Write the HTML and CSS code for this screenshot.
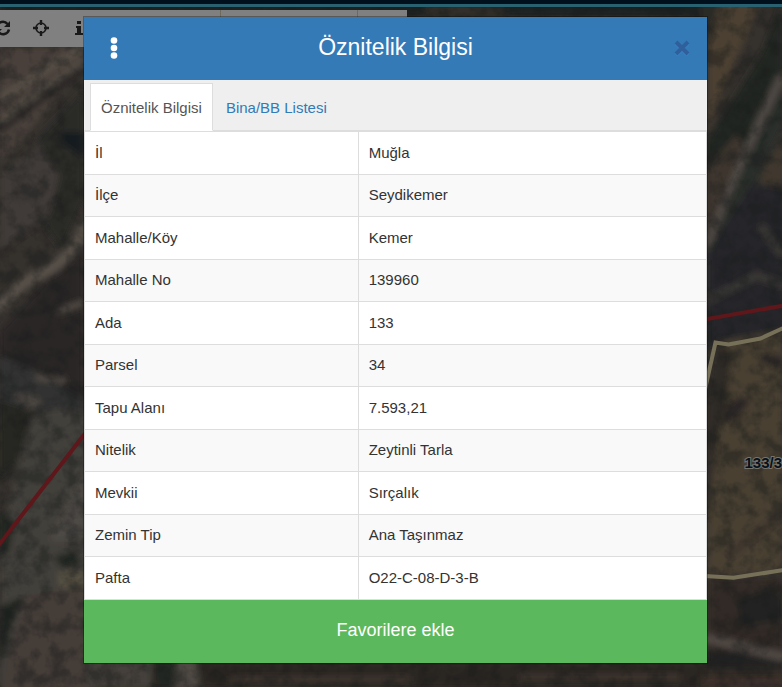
FILE: index.html
```
<!DOCTYPE html>
<html lang="tr">
<head>
    <meta charset="utf-8">
    <title>Parsel Sorgu</title>
    <link rel="stylesheet" href="styles.css">
</head>
<body>
<!-- Map -->
<svg class="map" viewBox="0 0 782 687" preserveAspectRatio="xMidYMid slice" aria-hidden="true">
    <defs>
        <filter id="soft" x="-10%" y="-10%" width="120%" height="120%"><feGaussianBlur stdDeviation="3"/></filter>
        <filter id="ground" x="0" y="0" width="100%" height="100%" color-interpolation-filters="sRGB">
            <feTurbulence type="fractalNoise" baseFrequency="0.06" numOctaves="4" seed="8"/>
            <feColorMatrix values="0 0 0 0 0.09  0 0 0 0 0.1  0 0 0 0 0.1  3 0 0 0 -1.2"/>
        </filter>
    </defs>
    <rect width="782" height="687" fill="#35312d"/>
    <g filter="url(#soft)">
        <!-- left side -->
        <path d="M0 47h84v20L0 165z" fill="#48413b"/>
        <path d="M0 98L84 47M0 122L84 62" stroke="#575047" stroke-width="7"/>
        <path d="M0 130L84 68" stroke="#292825" stroke-width="8"/>
        <path d="M40 135L84 90v110L62 250 20 190z" fill="#292a28"/>
        <path d="M0 175l40-30 20 30-10 40-50 35z" fill="#403b37"/>
        <path d="M60 132h24v25L66 145z" fill="#131a20"/>
        <path d="M0 330l84-90v190H0z" fill="#292826"/>
        <path d="M-5 313Q15 285 44 272T90 218" fill="none" stroke="#58514a" stroke-width="11"/>
        <path d="M0 355Q40 370 84 400v10H0z" fill="#333230"/>
        <path d="M36 377l30 3M15 395l22 6-15 14M58 312l26-10" fill="none" stroke="#575048" stroke-width="5"/>
        <path d="M30 420Q50 400 90 414V700H0V540z" fill="#433f3a"/>
        <path d="M0 400l34 10-16 50-18 20z" fill="#252624"/>
        <path d="M50 540L84 470v70z" fill="#4d4a44"/>
        <path d="M0 510l15 10-5 30-10 10zM0 605l23-8-12 30-11 40zM54 556l20-6 10 13-22 4z" fill="#232522"/>
        <path d="M60 571h26v14H60z" fill="#5d5646"/>
        <path d="M24 595L90 584v110H0z" fill="#443d38"/>
        <!-- strip under the dialog -->
        <path d="M84 660h623v27H84z" fill="#292622"/>
        <path d="M84 660h68v27H84z" fill="#443f3a"/>
        <path d="M154 660h36l12 27h-44z" fill="#222522"/>
        <path d="M178 660h18l4 27h-26z" fill="#514b44"/>
        <path d="M230 678h180M520 676h160" stroke="#3d352f" stroke-width="6"/>
        <!-- right side -->
        <path d="M680 0h80L707 130V30z" fill="#4b3f33"/>
        <path d="M680 0h40l-15 60z" fill="#2a2926"/>
        <path d="M782 0v110l-75 150V140l56-90z" fill="#242624"/>
        <path d="M707 168l30-35 10 20-40 90z" fill="#3c342e"/>
        <path d="M707 248Q740 160 782 75" fill="none" stroke="#504a44" stroke-width="9"/>
        <path d="M717 255Q747 170 787 100" fill="none" stroke="#2a2d29" stroke-width="18"/>
        <path d="M765 165l20-25v50l-28 5z" fill="#40372f"/>
        <path d="M707 253l45-70 35 5v150l-80 10z" fill="#25282a"/>
        <path d="M707 300l50-25 26 10M760 225l22 30" fill="none" stroke="#3b3835" stroke-width="7"/>
        <path d="M715 342l67-12v240l-75 6v-180z" fill="#4a3f32"/>
        <path d="M707 390l10-45 15 5-6 50-12 60-7 70z" fill="#2d2b27"/>
        <path d="M726 405l14-10 11 5-16 20-14 3zM760 352l20 3 2 14-24-9z" fill="#2a2825"/>
        <path d="M728 555l54-42" stroke="#3c362d" stroke-width="8"/>
        <path d="M707 578h75v109h-75z" fill="#302b27"/>
        <path d="M738 600l32-12 12 10v20l-40 7zM707 650h75v17h-75z" fill="#202322"/>
        <path d="M700 636L790 658" stroke="#514a44" stroke-width="9"/>
        <path d="M700 680h85" stroke="#3c332b" stroke-width="9"/>
        <!-- above the title bar -->
        <path d="M0 0h700v17H0z" fill="#1f2120"/>
        <path d="M425 10h80" stroke="#37332d" stroke-width="7"/>
    </g>
    <rect width="782" height="687" filter="url(#ground)" opacity=".4"/>
    <path d="M-2 546L90 427M704 319l80-14" fill="none" stroke="#5e171a" stroke-width="4"/>
    <path d="M700 409l15-67 13 2 32-6 24-11M700 575l33 2 51-8" fill="none" stroke="#777059" stroke-width="4"/>
    <text class="parcel-label" x="744" y="467">133/3</text>
</svg>

<div class="topbar"></div>
<div class="toolbar">
    <div class="tool-group">
        <button type="button" aria-label="Yenile">
            <svg viewBox="0 0 16 16"><path d="M2 6.500A6 6 0 0 1 12.500 4M14 9.500A6 6 0 0 1 3.500 12" fill="none" stroke="currentColor" stroke-width="2.500"/><path d="M15 1v6H9zM1 15V9h6z" fill="currentColor"/></svg>
        </button>
        <button type="button" aria-label="Konum">
            <svg viewBox="0 0 16 16"><circle cx="8" cy="8" r="5" fill="none" stroke="currentColor" stroke-width="1.600"/><path d="M8 0v5M8 11v5M0 8h5M11 8h5" stroke="currentColor" stroke-width="2.400"/></svg>
        </button>
        <button type="button" aria-label="Bilgi">
            <svg viewBox="0 0 16 16"><path d="M6 1h4v3H6zM5 6h5v7h2v2H4v-2h2V8H5z" fill="currentColor"/></svg>
        </button>
    </div>
    <div class="tool-group"></div>
    <div class="tool-group"></div>
</div>

<!-- Dialog -->
<div class="dialog-wrap">
    <div class="dialog" role="dialog" aria-labelledby="dialogTitle">
        <div class="dialog-header">
            <button type="button" class="menu-btn" aria-label="Menü">
                <svg viewBox="0 0 8 22"><circle cx="4" cy="3.500" r="3.300"/><circle cx="4" cy="11" r="3.300"/><circle cx="4" cy="18.500" r="3.300"/></svg>
            </button>
            <h1 id="dialogTitle">Öznitelik Bilgisi</h1>
            <button type="button" class="close-btn" aria-label="Kapat">
                <svg viewBox="0 0 18 18"><path d="M3 4l12 12M15 4L3 16" stroke="#3a85ca" stroke-width="4"/><path d="M3 3l12 12M15 3L3 15" stroke="#2f609b" stroke-width="4"/></svg>
            </button>
        </div>
        <nav class="tabs">
            <a href="#oznitelik" class="tab active">Öznitelik Bilgisi</a>
            <a href="#bina" class="tab">Bina/BB Listesi</a>
        </nav>
        <table class="info-table" id="oznitelik">
            <tbody>
            <tr><th scope="row">İl</th><td>Muğla</td></tr>
            <tr><th scope="row">İlçe</th><td>Seydikemer</td></tr>
            <tr><th scope="row">Mahalle/Köy</th><td>Kemer</td></tr>
            <tr><th scope="row">Mahalle No</th><td>139960</td></tr>
            <tr><th scope="row">Ada</th><td>133</td></tr>
            <tr><th scope="row">Parsel</th><td>34</td></tr>
            <tr><th scope="row">Tapu Alanı</th><td>7.593,21</td></tr>
            <tr><th scope="row">Nitelik</th><td>Zeytinli Tarla</td></tr>
            <tr><th scope="row">Mevkii</th><td>Sırçalık</td></tr>
            <tr><th scope="row">Zemin Tip</th><td>Ana Taşınmaz</td></tr>
            <tr><th scope="row">Pafta</th><td>O22-C-08-D-3-B</td></tr>
            </tbody>
        </table>
        <button type="button" class="favorite-btn">Favorilere ekle</button>
    </div>
</div>
</body>
</html>
```
FILE: styles.css
```
* {
    box-sizing: border-box;
}

body {
    margin: 0;
    min-height: 100vh;
    position: relative;
    overflow: hidden;
    background-color: #2e2b28;
    font-family: "Liberation Sans", Arial, sans-serif;
    font-size: 15px;
    color: #333;
}

button {
    border: none;
    padding: 0;
    background: none;
    font-family: inherit;
    cursor: pointer;
}

/* map and the bars behind the dialog */
.map {
    position: absolute;
    top: 0;
    left: 0;
    width: 100%;
    height: 100%;
}

.parcel-label {
    font-size: 15px;
    font-weight: bold;
    fill: #07111c;
    stroke: #77736b;
    stroke-width: 2px;
    paint-order: stroke;
}

.topbar {
    position: absolute;
    top: 0;
    left: 0;
    right: 0;
    height: 7px;
    background-color: #00101c;
    border-bottom: 3px solid #296170;
}

.toolbar {
    position: absolute;
    top: 10px;
    left: -16px;
    display: flex;
    height: 37px;
    padding-bottom: 2px;
    background-color: #808080;
}

.tool-group {
    display: flex;
    width: 49px;
}

.tool-group:first-child {
    width: 237px;
}

.tool-group:nth-child(2) {
    width: 137px;
}

.tool-group:not(:last-child) {
    border-right: 1px solid #6f6a5c;
}

.tool-group button {
    display: flex;
    align-items: center;
    justify-content: center;
    width: 38px;
    color: #191919;
}

.tool-group svg {
    width: 16px;
    height: 16px;
}

/* dialog */
.dialog-wrap {
    position: relative;
    padding: 17px 75px 25px 84px;
}

.dialog {
    background-color: #fff;
    box-shadow: 0 0 0 1px rgba(0, 0, 0, 0.3);
}

.dialog-header {
    display: flex;
    align-items: center;
    justify-content: space-between;
    height: 63px;
    padding: 0 16px 2px 26px;
    background-color: #337ab7;
    color: #fff;
}

.dialog-header h1 {
    margin: 0;
    font-size: 23px;
    font-weight: normal;
}

.menu-btn svg {
    display: block;
    width: 8px;
    height: 22px;
    fill: #fff;
}

.close-btn svg {
    display: block;
    width: 18px;
    height: 18px;
}

.tabs {
    display: flex;
    gap: 2px;
    padding: 3px 6px 0;
    background-color: #efefef;
    border-bottom: 1px solid #ddd;
}

.tab {
    margin-bottom: -1px;
    padding: 14px 10px 12px;
    border: 1px solid transparent;
    line-height: 20px;
    color: #337ab7;
    text-decoration: none;
}

.tab.active {
    background-color: #fff;
    border-color: #ddd;
    border-bottom-color: #fff;
    color: #555;
}

.info-table {
    width: 100%;
    border-collapse: collapse;
    table-layout: fixed;
}

.info-table th,
.info-table td {
    height: 42px;
    padding: 0 10px 2px;
    border: 1px solid #ddd;
    font-weight: normal;
    text-align: left;
}

.info-table th {
    width: 44%;
}

.info-table tr:nth-child(odd) td {
    height: 43px;
}

.info-table tr:nth-child(even) {
    background-color: #f9f9f9;
}

.favorite-btn {
    display: block;
    width: 100%;
    height: 63px;
    padding-bottom: 2px;
    background-color: #5cb85c;
    color: #fff;
    font-size: 18px;
}
```
